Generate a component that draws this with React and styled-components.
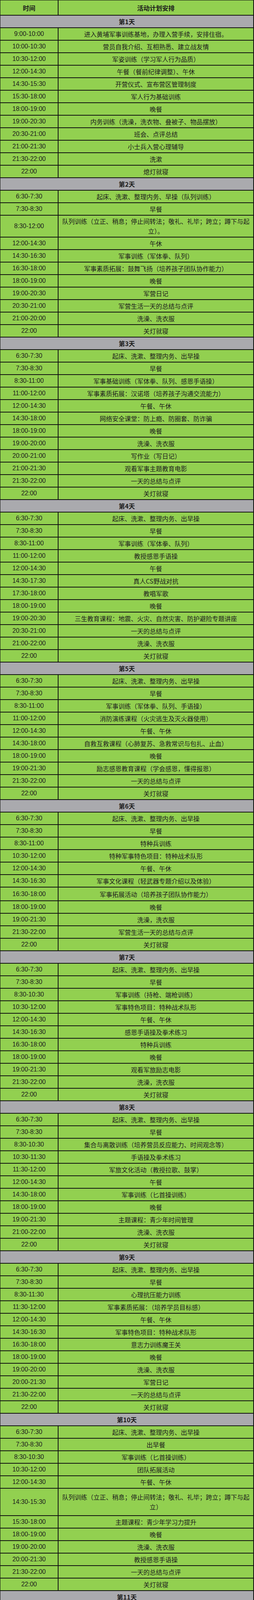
import React from "react";
import styled, { createGlobalStyle } from "styled-components";

const GlobalStyle = createGlobalStyle`
  html, body {
    margin: 0;
    padding: 0;
    background: #ffffff;
  }
`;

const LINEUP =
  "队列训练（立正、稍息；停止间转法；敬礼、礼毕；跨立；蹲下与起立）";
const WAKE = "起床、洗漱、整理内务、出早操";
const SUMMARY = "一天的总结与点评";
const SLEEP = "关灯就寝";
const BATH = "洗澡、洗衣服";

// [time, activity, row height when it is not the usual 32px]
const days = [
  [
    ["9:00-10:00", "进入黄埔军事训练基地，办理入营手续，安排住宿。"],
    ["10:00-10:30", "营员自我介绍、互相熟悉、建立战友情"],
    ["10:30-12:00", "军姿训练（学习军人行为品质）"],
    ["12:00-14:30", "午餐（餐前纪律调整）、午休"],
    ["14:30-15:30", "开营仪式、宣布营区管理制度"],
    ["15:30-18:00", "军人行为基础训练"],
    ["18:00-19:00", "晚餐"],
    ["19:00-20:30", "内务训练（洗澡，洗衣物、叠被子、物品摆放）"],
    ["20:30-21:00", "班会、点评总结"],
    ["21:00-21:30", "小士兵入营心理辅导"],
    ["21:30-22:00", "洗漱"],
    ["22:00", "熄灯就寝"],
  ],
  [
    ["6:30-7:30", "起床、洗漱、整理内务、早操（队列训练）"],
    ["7:30-8:30", "早餐"],
    ["8:30-12:00", LINEUP + "。", 56],
    ["12:00-14:30", "午休"],
    ["14:30-16:30", "军事训练（军体拳、队列）"],
    ["16:30-18:00", "军事素质拓展：鼓舞飞扬（培养孩子团队协作能力）"],
    ["18:00-19:00", "晚餐"],
    ["19:00-20:30", "军营日记"],
    ["20:30-21:00", "军营生活一天的总结与点评"],
    ["21:00-20:00", BATH],
    ["22:00", SLEEP],
  ],
  [
    ["6:30-7:30", WAKE],
    ["7:30-8:30", "早餐"],
    ["8:30-11:00", "军事基础训练（军体拳、队列、感恩手语操）"],
    ["11:00-12:00", "军事素质拓展：汉诺塔（培养孩子沟通交流能力）"],
    ["12:00-14:30", "午餐、午休"],
    ["14:30-18:00", "网络安全课堂：防上瘾、防圈套、防诈骗"],
    ["18:00-19:00", "晚餐"],
    ["19:00-20:00", BATH],
    ["20:00-21:00", "写作业（写日记）"],
    ["21:00-21:30", "观看军事主题教育电影"],
    ["21:30-22:00", SUMMARY],
    ["22:00", SLEEP],
  ],
  [
    ["6:30-7:30", WAKE],
    ["7:30-8:30", "早餐"],
    ["8:30-11:00", "军事训练（军体拳、队列）"],
    ["11:00-12:00", "教授感恩手语操"],
    ["12:00-14:30", "午餐"],
    ["14:30-17:30", "真人CS野战对抗"],
    ["17:30-18:00", "教唱军歌"],
    ["18:00-19:00", "晚餐"],
    ["19:00-20:30", "三生教育课程：地震、火灾、自然灾害、防护避险专题讲座"],
    ["20:30-21:00", SUMMARY],
    ["21:00-22:00", BATH],
    ["22:00", SLEEP],
  ],
  [
    ["6:30-7:30", WAKE],
    ["7:30-8:30", "早餐"],
    ["8:30-11:00", "军事训练（军体拳、队列、手语操）"],
    ["11:00-12:00", "消防演练课程（火灾逃生及灭火器使用）"],
    ["12:00-14:30", "午餐、午休"],
    ["14:30-18:00", "自救互救课程（心肺复苏、急救常识与包扎、止血）"],
    ["18:00-19:00", "晚餐"],
    ["19:00-21:30", "励志感恩教育课程（学会感恩，懂得报恩）"],
    ["21:30-22:00", SUMMARY],
    ["22:00", SLEEP],
  ],
  [
    ["6:30-7:30", WAKE],
    ["7:30-8:30", "早餐"],
    ["8:30-11:00", "特种兵训练"],
    ["10:30-12:00", "特种军事特色项目：特种战术队形"],
    ["12:00-14:30", "午餐、午休"],
    ["14:30-16:30", "军事文化课程（轻武器专题介绍以及体验）"],
    ["16:30-18:00", "军事拓展活动（培养孩子团队协作能力）", 35],
    ["18:00-19:00", "晚餐"],
    ["19:00-21:30", "洗澡，洗衣服"],
    ["21:30-22:00", "军营生活一天的总结与点评"],
    ["22:00", SLEEP],
  ],
  [
    ["6:30-7:30", WAKE],
    ["7:30-8:30", "早餐"],
    ["8:30-10:30", "军事训练（持枪、端枪训练）"],
    ["10:30-12:00", "军事特色项目：特种战术队形"],
    ["12:00-14:30", "午餐、午休"],
    ["14:30-16:30", "感恩手语操及拳术练习"],
    ["16:30-18:00", "特种兵训练"],
    ["18:00-19:00", "晚餐"],
    ["19:00-21:30", "观看军旅励志电影"],
    ["21:30-22:00", "洗澡，洗衣服"],
    ["22:00", SLEEP],
  ],
  [
    ["6:30-7:30", WAKE],
    ["7:30-8:30", "早餐"],
    ["8:30-10:30", "集合与离散训练（培养营员反应能力、时间观念等）"],
    ["10:30-11:30", "手语操及拳术练习"],
    ["11:30-12:00", "军旅文化活动（教授拉歌、鼓掌）"],
    ["12:00-14:30", "午餐"],
    ["14:30-18:00", "军事训练（匕首操训练）"],
    ["18:00-19:00", "晚餐"],
    ["19:00-21:30", "主题课程：青少年时间管理"],
    ["21:00-22:00", BATH],
    ["22:00", SLEEP],
  ],
  [
    ["6:30-7:30", WAKE],
    ["7:30-8:30", "早餐"],
    ["8:30-11:30", "心理抗压能力训练"],
    ["11:30-12:00", "军事素质拓展：（培养学员目标感）"],
    ["12:00-14:30", "午餐、午休"],
    ["14:30-16:30", "军事特色项目：特种战术队形"],
    ["16:30-18:00", "意志力训练魔王关"],
    ["18:00-19:00", "晚餐"],
    ["19:00-20:00", BATH],
    ["20:00-21:30", "军营日记"],
    ["21:30-22:00", SUMMARY],
    ["22:00", SLEEP],
  ],
  [
    ["6:30-7:30", WAKE],
    ["7:30-8:30", "出早餐"],
    ["8:30-10:30", "军事训练（匕首操训练）"],
    ["10:30-12:00", "团队拓展活动"],
    ["12:00-14:30", "午餐、午休"],
    ["14:30-15:30", LINEUP, 70],
    ["15:30-18:00", "主题课程：青少年学习力提升"],
    ["18:00-19:00", "晚餐"],
    ["19:00-20:00", BATH],
    ["20:00-21:30", "教授感恩手语操"],
    ["21:30-22:00", SUMMARY],
    ["22:00", SLEEP],
  ],
  [
    ["6:30-7:30", WAKE],
    ["7:30-8:30", "早餐"],
    ["8:30-10:30", "军事训练（匕首操训练）"],
    ["10:30-12:00", "教授感恩手语《跪羊图》"],
    ["12:00-14:30", "午餐、午休"],
    ["14:30-16:30", "军营文化生活（营区大扫除，洗衣服、晒被子）"],
    ["16:30-18:00", "军事素质拓展：极速60秒（培养学员思维能力）"],
    ["18:00-19:00", "晚餐"],
    ["19:00-20:30", "观看励志感恩电影"],
    ["20:30-21:00", SUMMARY],
    ["21:00-22:00", BATH],
    ["22:00", SLEEP],
  ],
  [
    ["6:30-7:30", WAKE],
    ["7:30-8:30", "早餐"],
    ["8:30-10:30", "素质拓展活动"],
    ["10:30-12:00", "军人行为强化训练"],
    ["12:00-14:30", "午餐、午休"],
    ["14:30-18:00", "军事训练（匕首操、拳术）"],
    ["18:00-19:00", "晚餐"],
    ["19:00-20:00", BATH],
    ["20:00-21:00", "军营文化生活（军歌拉练）"],
    ["21:00-21:30", "军营日记"],
    ["21:30-22:00", SUMMARY],
    ["22:00", SLEEP],
  ],
  [
    ["6:30-7:30", WAKE],
    ["7:30-8:30", "早餐"],
    ["8:30-10:30", LINEUP, 53],
    ["10:30-12:00", "军事训练（匕首操）"],
    ["12:00-14:30", "午餐、午休"],
    ["14:30-16:30", "军事装备体验（了解轻武器专题介绍以及拆卸组装体验）"],
    ["16:30-18:00", "军事大演练"],
    ["18:00-19:00", "晚餐"],
    ["19:00-20:00", BATH],
    ["20:00-21:30", "军营狂欢夜（珍惜战友情，学会分享）"],
    ["21:30-22:00", SUMMARY],
    ["22:00", SLEEP],
  ],
  [
    ["6:30-7:30", WAKE],
    ["7:30-8:30", "早餐"],
    ["8:30-10:30", "军事训练（匕首操）"],
    ["10:30-12:00", "军事训练（军体拳训练）"],
    ["12:00-14:30", "午餐、午休"],
    ["14:30-16:30", "特种兵训练"],
    ["16:30-18:00", LINEUP, 52],
    ["18:00-19:00", "晚餐"],
    ["19:00-20:00", BATH],
    ["20:00-21:30", "观看军旅励志电影"],
    ["21:30-22:00", SUMMARY],
    ["22:00", SLEEP],
  ],
];

const Table = styled.div`
  width: 651px;
  box-sizing: border-box;
  border-top: 1px solid #111;
  border-left: 1px solid #111;
  border-right: 2px solid #111;
  background: #92d050;
  color: #1c1c1c;
  font-family: "Noto Sans CJK SC", "Liberation Sans", sans-serif;
  font-size: 16px;
  line-height: 22px;
`;

const Row = styled.div`
  display: grid;
  grid-template-columns: 149px 1fr;
  box-sizing: border-box;
  height: ${(props) => props.$h || 32}px;
  border-bottom: 2px solid #111;
  overflow: hidden;
`;

const HeadRow = styled(Row)`
  height: 39px;
  font-weight: bold;
`;

const Cell = styled.div`
  display: flex;
  align-items: center;
  justify-content: center;
  text-align: center;
  box-sizing: border-box;
  min-width: 0;
  padding: 0 6px;
`;

const Text = styled.span`
  display: block;
  line-height: ${(props) => (props.$tall ? 25 : 22)}px;
`;

const TimeCell = styled(Cell)`
  border-right: 2px solid #111;
  font-family: "Liberation Sans", "Noto Sans CJK SC", sans-serif;
  padding: 0;
`;

const HeadTime = styled(TimeCell)`
  font-family: "Noto Sans CJK SC", sans-serif;
`;

const DayRow = styled.div`
  display: flex;
  align-items: center;
  justify-content: center;
  box-sizing: border-box;
  height: 32px;
  border-bottom: 2px solid #111;
  background: #aaaaae;
  font-weight: bold;
`;

export default function App() {
  return (
    <>
      <GlobalStyle />
      <Table>
        <HeadRow>
          <HeadTime>时间</HeadTime>
          <Cell>活动计划安排</Cell>
        </HeadRow>
        {days.map((rows, i) => (
          <React.Fragment key={i}>
            <DayRow>{`第${i + 1}天`}</DayRow>
            {rows.map(([time, text, h], j) => (
              <Row key={j} $h={h}>
                <TimeCell>{time}</TimeCell>
                <Cell>
                  <Text $tall={h > 40}>{text}</Text>
                </Cell>
              </Row>
            ))}
          </React.Fragment>
        ))}
      </Table>
    </>
  );
}
